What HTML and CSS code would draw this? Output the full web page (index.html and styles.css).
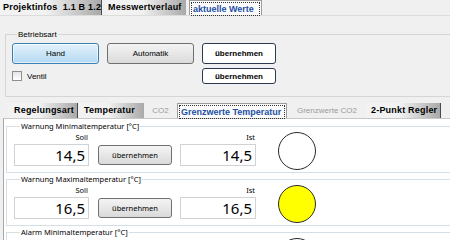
FILE: index.html
```html
<!DOCTYPE html>
<html lang="de">
<head>
<meta charset="UTF-8">
<meta name="viewport" content="width=device-width, initial-scale=1.0">
<title>aktuelle Werte</title>
<link rel="stylesheet" href="styles.css">
</head>
<body>
<div class="window">
<div class="tabs main-tabs">
<div class="tab edge t-info">Projektinfos &nbsp;1.1 B 1.2</div>
<div class="tab t-verlauf">Messwertverlauf</div>
<div class="tab active t-werte"><span>aktuelle Werte</span></div>
</div>

<div class="page">
<fieldset class="group mode-group">
<legend>Betriebsart</legend>
<div class="mode-grid">
<button class="btn mode selected">Hand</button>
<button class="btn mode">Automatik</button>
<button class="btn apply">übernehmen</button>
<label class="check"><span class="box"></span>Ventil</label>
<span></span>
<button class="btn apply small">übernehmen</button>
</div>
</fieldset>

<div class="tabs sub-tabs">
<div class="tab edge t-regel">Regelungsart</div>
<div class="tab t-temp">Temperatur</div>
<div class="tab disabled t-co2">CO2</div>
<div class="tab active t-gtemp"><span>Grenzwerte Temperatur</span></div>
<div class="tab disabled t-gco2">Grenzwerte CO2</div>
<div class="tab edge t-punkt">2-Punkt Regler</div>
</div>

<div class="sub-page">
<fieldset class="group limit">
<legend>Warnung Minimaltemperatur [°C]</legend>
<div class="limit-row">
<div class="field"><span class="cap">Soll</span><div class="value">14,5</div></div>
<button class="btn take">übernehmen</button>
<div class="field ist"><span class="cap">Ist</span><div class="value">14,5</div></div>
<span class="lamp"></span>
</div>
</fieldset>

<fieldset class="group limit">
<legend>Warnung Maximaltemperatur [°C]</legend>
<div class="limit-row">
<div class="field"><span class="cap">Soll</span><div class="value">16,5</div></div>
<button class="btn take">übernehmen</button>
<div class="field ist"><span class="cap">Ist</span><div class="value">16,5</div></div>
<span class="lamp on"></span>
</div>
</fieldset>

<fieldset class="group limit">
<legend>Alarm Minimaltemperatur [°C]</legend>
<div class="limit-row">
<div class="field"><span class="cap">Soll</span><div class="value">12,0</div></div>
<button class="btn take">übernehmen</button>
<div class="field ist"><span class="cap">Ist</span><div class="value">14,5</div></div>
<span class="lamp"></span>
</div>
</fieldset>
</div>
</div>
</div>
</body>
</html>
```

FILE: styles.css
```css
body {
margin: 0;
background-color: #f0f0f0;
font-family: "Liberation Sans", Arial, sans-serif;
font-size: 8px;
color: #000;
width: 450px;
height: 240px;
overflow: hidden;
}
.window {
width: 470px;
}

/* tab strips */
.tabs {
display: flex;
height: 15px;
}
.tab {
box-sizing: border-box;
font-weight: bold;
font-size: 9px;
letter-spacing: 0.2px;
line-height: 15px;
padding-left: 3px;
background: linear-gradient(to right, #f2f2f2 45%, #a9a9a9);
white-space: nowrap;
}
.tab.edge {
border-right: 1px solid #4a4a4a;
}
.tab.disabled {
background: none;
color: #9a9a9a;
font-size: 8px;
font-weight: normal;
letter-spacing: 0;
text-align: center;
padding-left: 0;
}
.tab.active {
background: #fbfbfb;
color: #1d4fa5;
border: 1px solid #9c9c9c;
border-bottom: none;
padding: 1px 1px 0;
line-height: 12px;
letter-spacing: 0;
}
.tab.active span {
display: block;
border: 1px dotted #333;
padding: 0 0 0 1px;
}
.main-tabs {
border-bottom: 1px solid #dcdcdc;
}
.t-info { width: 102px; }
.t-verlauf { width: 81px; margin-left: 3px; }
.t-werte { width: 73px; margin-left: 3px; }

.sub-tabs {
margin: 6px 0 0 8px;
}
.t-regel { width: 70px; padding-left: 6px; }
.t-temp { width: 65px; margin-left: 1px; padding-left: 5px; }
.t-co2 { width: 31px; margin-left: 1px; }
.t-gtemp { width: 110px; margin-left: 1px; }
.t-gco2 { width: 78px; margin-left: 1px; }
.t-punkt { width: 75px; padding-left: 5px; }

/* group boxes */
.group {
margin: 0;
padding: 0;
border: 1px solid #d5d5d5;
min-width: 0;
}
.group legend {
padding: 0 1px;
margin-left: 5px;
line-height: 9px;
}
.page {
padding-top: 14px;
}
.mode-group {
margin-left: 5px;
padding: 4px 0 12px 6px;
}
.mode-grid {
display: grid;
grid-template-columns: 87px 87px 74px;
column-gap: 8px;
row-gap: 4px;
align-items: center;
}

/* buttons */
.btn {
font-family: inherit;
font-size: 8px;
color: #000;
padding: 0;
margin: 0;
border: 1px solid #707070;
border-radius: 3px;
background: linear-gradient(#f4f4f4, #dadada);
}
.mode {
height: 21px;
}
.mode.selected {
background: linear-gradient(#e4f2fb, #b3d9f3);
border-color: #3c7fb1;
box-shadow: inset 0 0 0 1px rgba(255, 255, 255, 0.6);
}
.apply {
height: 21px;
background: #fff;
border-color: #2c3a50;
font-weight: bold;
}
.apply.small {
height: 16px;
}
.check {
display: flex;
align-items: center;
}
.check .box {
width: 8px;
height: 8px;
border: 1px solid #8f8f8f;
background: linear-gradient(#e6e6e6, #fff);
margin-right: 5px;
}

/* limit values */
.sub-page {
margin-left: 3px;
background: #fff;
border-left: 1px solid #a8a8a8;
border-top: 1px solid #c8c8c8;
padding: 3px 0 0 2px;
font-family: "Noto Sans", "Liberation Sans", sans-serif;
font-size: 7.5px;
}
.limit {
border-color: #d5dfe5;
padding: 1px 0 2px 7px;
margin-bottom: 2px;
}
.limit legend {
margin-left: 6px;
}
.limit-row {
display: flex;
align-items: flex-start;
}
.field {
width: 75px;
display: flex;
flex-direction: column;
}
.field.ist {
width: 76px;
}
.cap {
text-align: right;
padding-right: 1px;
line-height: 10px;
margin-bottom: 2px;
}
.value {
height: 22px;
box-sizing: border-box;
border: 1px solid #cfd3d6;
font-size: 15px;
line-height: 20px;
text-align: right;
padding-right: 3px;
}
.take {
font-family: inherit;
font-size: 7.5px;
width: 74px;
height: 20px;
margin: 13px 8px 0 9px;
}
.lamp {
width: 36px;
height: 36px;
margin-left: 22px;
border: 1px solid #2b2b2b;
border-radius: 50%;
background: #fff;
}
.lamp.on {
background: #ffff00;
}
```
